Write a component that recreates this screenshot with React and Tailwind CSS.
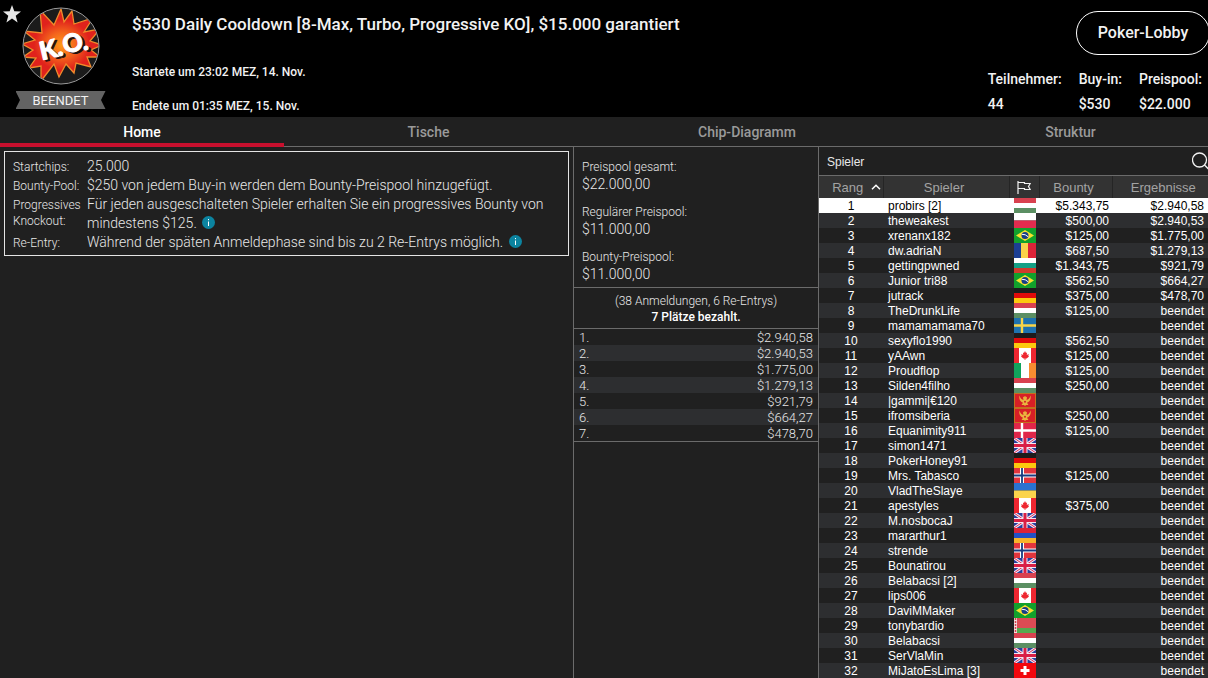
import React, { useState } from 'react';

const players = [
  ['probirs [2]', 'hu', '$5.343,75', '$2.940,58'],
  ['theweakest', 'pl', '$500,00', '$2.940,53'],
  ['xrenanx182', 'br', '$125,00', '$1.775,00'],
  ['dw.adriaN', 'ro', '$687,50', '$1.279,13'],
  ['gettingpwned', 'bg', '$1.343,75', '$921,79'],
  ['Junior tri88', 'br', '$562,50', '$664,27'],
  ['jutrack', 'de', '$375,00', '$478,70'],
  ['TheDrunkLife', 'hu', '$125,00', 'beendet'],
  ['mamamamama70', 'se', '', 'beendet'],
  ['sexyflo1990', 'de', '$562,50', 'beendet'],
  ['yAAwn', 'ca', '$125,00', 'beendet'],
  ['Proudflop', 'ie', '$125,00', 'beendet'],
  ['Silden4filho', 'hu', '$250,00', 'beendet'],
  ['|gammi|€120', 'me', '', 'beendet'],
  ['ifromsiberia', 'me', '$250,00', 'beendet'],
  ['Equanimity911', 'dk', '$125,00', 'beendet'],
  ['simon1471', 'gb', '', 'beendet'],
  ['PokerHoney91', 'de', '', 'beendet'],
  ['Mrs. Tabasco', 'no', '$125,00', 'beendet'],
  ['VladTheSlaye', 'ua', '', 'beendet'],
  ['apestyles', 'ca', '$375,00', 'beendet'],
  ['M.nosbocaJ', 'gb', '', 'beendet'],
  ['mararthur1', 'am', '', 'beendet'],
  ['strende', 'no', '', 'beendet'],
  ['Bounatirou', 'gb', '', 'beendet'],
  ['Belabacsi [2]', 'hu', '', 'beendet'],
  ['lips006', 'ca', '', 'beendet'],
  ['DaviMMaker', 'br', '', 'beendet'],
  ['tonybardio', 'by', '', 'beendet'],
  ['Belabacsi', 'hu', '', 'beendet'],
  ['SerVlaMin', 'gb', '', 'beendet'],
  ['MiJatoEsLima [3]', 'ch', '', 'beendet'],
];

const payouts = ['$2.940,58', '$2.940,53', '$1.775,00', '$1.279,13', '$921,79', '$664,27', '$478,70'];

const pools = [
  ['Preispool gesamt:', '$22.000,00'],
  ['Regulärer Preispool:', '$11.000,00'],
  ['Bounty-Preispool:', '$11.000,00'],
];

const summary = [
  ['Teilnehmer:', '44'],
  ['Buy-in:', '$530'],
  ['Preispool:', '$22.000'],
];

const tabs = ['Home', 'Tische', 'Chip-Diagramm', 'Struktur'];

const stripes = {
  hu: ['#d8414f', '#ffffff', '#5b8f63'],
  pl: ['#ffffff', '#e22c4f'],
  bg: ['#ffffff', '#14a085', '#d23a2c'],
  de: ['#1c1c1c', '#e00a0a', '#fcc90e'],
  ua: ['#2a72d0', '#fbd44c'],
  am: ['#dc2338', '#2350c4', '#f8b32a'],
};

function Stripes({ colors }) {
  const h = 15 / colors.length;
  return colors.map((c, i) => <rect key={i} y={i * h} width="22" height={h} fill={c} />);
}

// nordic cross, with an optional inner cross
function Cross({ bg, outer, inner }) {
  return (
    <>
      <rect width="22" height="15" fill={bg} />
      <path d="M8 0V15M0 7.5H22" stroke={outer} strokeWidth={inner ? 4 : 2.4} />
      {inner && <path d="M8 0V15M0 7.5H22" stroke={inner} strokeWidth="1.8" />}
    </>
  );
}

function FlagArt({ code }) {
  if (stripes[code]) return <Stripes colors={stripes[code]} />;
  switch (code) {
    case 'br':
      return (
        <>
          <rect width="22" height="15" fill="#12a12c" />
          <path d="M11 2L20 7.5L11 13L2 7.5Z" fill="#f8e12e" />
          <circle cx="11" cy="7.5" r="3.5" fill="#173f85" />
          <path d="M7.8 6.3Q11.5 6 14.2 8.8" fill="none" stroke="#fff" strokeWidth="1" />
        </>
      );
    case 'ro':
      return (
        <>
          <rect width="22" height="15" fill="#fbd24a" />
          <rect width="7" height="15" fill="#1c3f94" />
          <rect x="14" width="8" height="15" fill="#dc2338" />
        </>
      );
    case 'ie':
      return (
        <>
          <rect width="22" height="15" fill="#fff" />
          <rect width="7" height="15" fill="#10a35c" />
          <rect x="15" width="7" height="15" fill="#f88c30" />
        </>
      );
    case 'ca':
      return (
        <>
          <rect width="22" height="15" fill="#fff" />
          <rect width="5" height="15" fill="#ee2630" />
          <rect x="17" width="5" height="15" fill="#ee2630" />
          <path d="M11 3L12 5L13 4.6L12.8 7L14.8 6L14.3 7.8L15 8.4L12.6 10.4H11.4V12H10.6V10.4H9.4L7 8.4L7.7 7.8L7.2 6L9.2 7L9 4.6L10 5Z" fill="#ee2630" />
        </>
      );
    case 'me':
      return (
        <>
          <rect x="0.5" y="0.5" width="21" height="14" fill="#d81f26" stroke="#c5701f" />
          <path d="M5.5 2.500C6.500 5.500 7.500 6.500 9.500 7L9 4.500L10.500 3L11 4.500L11.500 3L13 4.500L12.500 7C14.500 6.500 15.500 5.500 16.500 2.500C17.300 6.500 15.500 8.800 13 9.800L14.500 12H12L11 13L10 12H7.500L9 9.800C6.500 8.800 4.700 6.500 5.500 2.500Z" fill="#e9b43f" />
          <circle cx="11" cy="8.800" r="1" fill="#d81f26" />
        </>
      );
    case 'se':
      return <Cross bg="#1d72b0" outer="#f8d548" />;
    case 'dk':
      return <Cross bg="#e02649" outer="#ffffff" />;
    case 'no':
      return <Cross bg="#e2353d" outer="#ffffff" inner="#183c80" />;
    case 'gb':
      return (
        <>
          <rect width="22" height="15" fill="#2a3f9d" />
          <path d="M0 0L22 15M22 0L0 15" stroke="#f4e8f2" strokeWidth="3" />
          <path d="M0 0L22 15M22 0L0 15" stroke="#d92d55" strokeWidth="1" />
          <path d="M11 0V15M0 7.5H22" stroke="#f4e8f2" strokeWidth="5" />
          <path d="M11 0V15M0 7.5H22" stroke="#d91f45" strokeWidth="3" />
        </>
      );
    case 'by':
      return (
        <>
          <rect width="22" height="15" fill="#dc4b54" />
          <rect y="10" width="22" height="5" fill="#56a94f" />
          <rect width="3" height="15" fill="#f2dede" />
          <path d="M1.500 0V15" stroke="#d4454e" strokeWidth="1.500" strokeDasharray="2 1" />
        </>
      );
    default:
      return (
        <>
          <rect width="22" height="15" fill="#f2070d" />
          <path d="M11 3V12M6.500 7.500H15.500" stroke="#fff" strokeWidth="3" />
        </>
      );
  }
}

function Flag({ code }) {
  return (
    <svg viewBox="0 0 22 15" className="mx-auto block h-[15px] w-[22px]" role="img" aria-label={code}>
      <FlagArt code={code} />
    </svg>
  );
}

function KoLetters({ color }) {
  return (
    <g fill={color} stroke={color}>
      <text x="17" y="48">K</text>
      <text x="34" y="48">.</text>
      <text x="41" y="47">O</text>
      <text x="60" y="48">.</text>
    </g>
  );
}

function KoLogo() {
  return (
    <svg viewBox="0 0 78 78" className="size-[78px]" role="img" aria-label="K.O.">
      <defs>
        <radialGradient id="burst">
          <stop offset="0" stopColor="#ff9a18" />
          <stop offset="0.35" stopColor="#f4651c" />
          <stop offset="0.7" stopColor="#e0221c" />
        </radialGradient>
        <clipPath id="disc">
          <circle cx="39" cy="39" r="37.5" />
        </clipPath>
      </defs>
      <circle cx="39" cy="39" r="38" fill="#1b1b1b" />
      <path
        clipPath="url(#disc)"
        d="M39 2L42 15L50 4L52 17L71 11L62 25L78 22L68 34L80 38L69 43L78 50L65 50L69 60L54 56L52 66L44 57L37 70L32 57L19 74L19 59L7 61L14 51L1 50L11 43L0 37L13 33L2 24L20 26L18 3L32 18Z"
        fill="url(#burst)"
        stroke="#f08a2b"
        strokeWidth="1.3"
      />
      <circle cx="39" cy="39" r="38" fill="none" stroke="#9a9a9a" />
      <g
        transform="rotate(-13 41 39)"
        fontFamily="Lato, sans-serif"
        fontWeight="900"
        fontSize="25"
        strokeLinejoin="round"
        strokeWidth="1"
      >
        <g transform="translate(2 2)">
          <KoLetters color="#221010" />
        </g>
        <KoLetters color="#ffffff" />
      </g>
    </svg>
  );
}

function Info() {
  return (
    <button type="button" aria-label="Info" className="ml-0.5 inline-flex size-[13px] items-center justify-center rounded-full bg-[#0c84a0] align-[-1px]">
      <svg viewBox="0 0 13 13" className="size-[13px]" stroke="#fff">
        <path d="M6.500 3V4.200M6.500 5.500V10" />
      </svg>
    </button>
  );
}

function Header() {
  return (
    <header className="flex h-[117px] overflow-hidden bg-black text-[#f2f2f2]">
      <button type="button" aria-label="Favorit" className="mt-[5px] ml-[3px] size-[18px] shrink-0">
        <svg viewBox="0 0 18 18" fill="#e6e6e6">
          <path d="M9 0L11.300 6.300L18 6.600L12.700 10.700L14.600 17.500L9 13.500L3.400 17.500L5.300 10.700L0 6.600L6.700 6.300Z" />
        </svg>
      </button>
      <div className="-ml-1.5 flex w-[91px] shrink-0 flex-col items-center pt-[7px]">
        <KoLogo />
        <div className="mt-1.5 h-[18px] w-[90px] bg-[#636363] text-center text-[13px] leading-[19px] [clip-path:polygon(0_0,100%_0,95%_50%,100%_100%,0_100%,5%_50%)]">
          BEENDET
        </div>
      </div>
      <div className="ml-[26px] flex-1 pt-3 font-medium">
        <h1 className="text-[17px] leading-6 font-medium">$530 Daily Cooldown [8-Max, Turbo, Progressive KO], $15.000 garantiert</h1>
        <p className="mt-7 text-[12px] leading-4">Startete um 23:02 MEZ, 14. Nov.</p>
        <p className="mt-[18px] text-[12px] leading-4">Endete um 01:35 MEZ, 15. Nov.</p>
      </div>
      <div className="flex flex-col items-end pt-[11px] font-medium">
        <button type="button" className="-mr-0.5 h-11 w-[134px] rounded-full border border-white text-[16px]">Poker-Lobby</button>
        <dl className="mt-3 flex gap-[17px] pr-1.5 text-[14px] leading-[25px]">
          {summary.map(([label, value]) => (
            <div key={label}>
              <dt>{label}</dt>
              <dd>{value}</dd>
            </div>
          ))}
        </dl>
      </div>
    </header>
  );
}

function Details() {
  return (
    <section className="min-w-0 flex-1 p-1">
      <dl className="grid grid-cols-[74px_1fr] border border-[#e4e4e4] px-2 pt-[5px] pb-[3px] text-[14px] leading-[19px]">
        <dt className="pt-0.5 text-[12px] leading-4">Startchips:</dt>
        <dd>25.000</dd>
        <dt className="pt-0.5 text-[12px] leading-4">Bounty-Pool:</dt>
        <dd>$250 von jedem Buy-in werden dem Bounty-Preispool hinzugefügt.</dd>
        <dt className="pt-0.5 text-[12px] leading-4">Progressives Knockout:</dt>
        <dd>
          Für jeden ausgeschalteten Spieler erhalten Sie ein progressives Bounty von mindestens $125. <Info />
        </dd>
        <dt className="pt-0.5 text-[12px] leading-4">Re-Entry:</dt>
        <dd>
          Während der späten Anmeldephase sind bis zu 2 Re-Entrys möglich. <Info />
        </dd>
      </dl>
    </section>
  );
}

function Prizes() {
  return (
    <section className="w-[245px] shrink-0 border-l border-[#6b6b6b]">
      <dl className="flex flex-col gap-2.5 border-b border-[#6b6b6b] px-2 pt-[11px] pb-1">
        {pools.map(([label, value]) => (
          <div key={label}>
            <dt className="text-[12px] leading-[18px]">{label}</dt>
            <dd className="text-[14px] leading-[17px]">{value}</dd>
          </div>
        ))}
      </dl>
      <div className="border-b border-[#6b6b6b] pt-[5px] pb-[3px] text-center text-[12px] leading-4">
        <p>(38 Anmeldungen, 6 Re-Entrys)</p>
        <p className="font-medium text-white">7 Plätze bezahlt.</p>
      </div>
      <ol className="border-b border-[#6b6b6b] text-[13px] leading-[18px]">
        {payouts.map((amount, i) => (
          <li key={i} className="flex h-4 justify-between px-[5px] even:bg-[#2d2e30]">
            <span>{i + 1}.</span>
            <span>{amount}</span>
          </li>
        ))}
      </ol>
    </section>
  );
}

function PlayerTable() {
  return (
    <section className="w-[390px] shrink-0 overflow-hidden border-l border-[#6b6b6b] font-['Liberation_Sans',Arial,sans-serif] font-normal">
      <div className="flex h-[29px] items-center justify-between border-b border-[#6b6b6b] pt-0.5 pl-2">
        <h2 className="text-[12px]">Spieler</h2>
        <button type="button" aria-label="Suchen" className="-mr-1">
          <svg viewBox="0 0 20 20" className="size-5" fill="none" stroke="#f2f2f2" strokeWidth="1.3">
            <circle cx="7.5" cy="8" r="7" />
            <path d="M12.5 13L18 18.5" />
          </svg>
        </button>
      </div>
      <table className="w-full table-fixed border-collapse text-[12px] leading-[13px] text-white">
        <colgroup>
          <col className="w-[64px]" />
          <col className="w-[126px]" />
          <col className="w-[30px]" />
          <col className="w-[73px]" />
          <col />
        </colgroup>
        <thead className="bg-[#333333] text-[#a3a3a3]">
          <tr className="h-[22px] text-[13px] [&>th]:py-0 [&>th]:font-normal">
            <th className="border-r border-[#252525] px-0">
              <button type="button" className="mx-auto flex items-center gap-2 pl-3">
                Rang
                <svg viewBox="0 0 10 6" className="h-1.5 w-2.5" fill="none" stroke="#fff" strokeWidth="1.5">
                  <path d="M1 5.300L5 1.300L9 5.300" />
                </svg>
              </button>
            </th>
            <th className="border-r border-[#252525] pr-1 pl-0">Spieler</th>
            <th className="border-r border-[#252525] px-0">
              <svg viewBox="0 0 14 13" className="mx-auto h-[13px] w-3.5" fill="none" stroke="#f2f2f2" strokeWidth="1.2" role="img" aria-label="Land">
                <path d="M1 0V13M1 1.500H7.500V2.500H13.200L11.500 5.500L13.200 8.500H7.500V7.500H1" />
              </svg>
            </th>
            <th className="border-r border-[#252525] pr-1 pl-0">Bounty</th>
            <th className="pr-0 pl-1.5">Ergebnisse</th>
          </tr>
        </thead>
        <tbody>
          {players.map(([name, code, bounty, result], i) => (
            <tr key={i} className={i === 0 ? 'h-[15px] bg-white text-black' : 'h-[15px] even:bg-[#2d2e30]'}>
              <td className="px-0 pt-0.5 pb-0 text-center">{i + 1}</td>
              <td className="pt-0.5 pr-0 pb-0 pl-[5px] whitespace-nowrap">{name}</td>
              <td className="py-0 pr-0 pl-0.5">
                <Flag code={code} />
              </td>
              <td className="pt-0.5 pr-[3px] pb-0 pl-0 text-right">{bounty}</td>
              <td className="pt-0.5 pr-1 pb-0 pl-0 text-right">{result}</td>
            </tr>
          ))}
        </tbody>
      </table>
    </section>
  );
}

function App() {
  const [activeTab, setActiveTab] = useState('Home');

  return (
    <div className="flex min-h-screen flex-col bg-[#202020] font-[Roboto,sans-serif] text-[#e8e8e8]">
      <Header />
      <nav className="grid h-[30px] shrink-0 grid-cols-[284fr_289fr_348fr_287fr] border-b border-[#6b6b6b] text-[14px] font-medium">
        {tabs.map((tab) => (
          <button
            key={tab}
            type="button"
            onClick={() => setActiveTab(tab)}
            className={
              activeTab === tab
                ? '-mb-px border-b-4 border-[#c8102e] pt-1 text-white'
                : 'pt-px text-[#9a9a9a] last:pl-3'
            }
          >
            {tab}
          </button>
        ))}
      </nav>
      <main className="flex flex-1 font-light">
        <Details />
        <Prizes />
        <PlayerTable />
      </main>
    </div>
  );
}

export default App;
